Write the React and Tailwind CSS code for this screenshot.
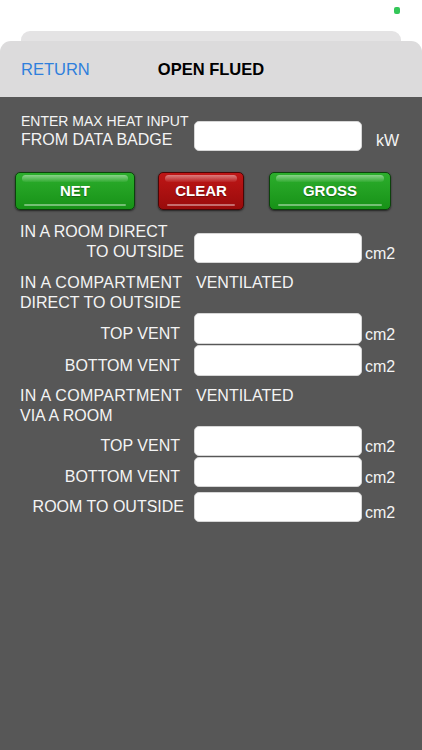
const labelText = 'text-[16px] leading-[20px] text-[#f4f4f4]';

function Field() {
  return <div className="h-full w-[168px] shrink-0 rounded-[5px] border border-[#d6d6d6] bg-white" />;
}

function GlossButton({ label, width, red }) {
  const tone = red
    ? 'border-[#4a0606] from-[#bf1616] to-[#990b0b]'
    : 'border-[#0c420c] from-[#2cae2c] to-[#179217]';
  return (
    <button
      className={`relative h-[38px] shrink-0 rounded-[5px] border bg-linear-to-b ${tone} shadow-[0_1px_2px_rgba(0,0,0,0.6)]`}
      style={{ width }}
    >
      <span className="absolute top-[2px] right-[6px] left-[6px] h-[7px] rounded-full bg-linear-to-b from-white/45 to-white/5" />
      <span className="absolute right-[8px] bottom-[3px] left-[8px] h-[2px] rounded-full bg-white/40" />
      <span className="relative text-[15px] font-bold text-white [text-shadow:0_1px_1px_rgba(0,0,0,0.35)]">{label}</span>
    </button>
  );
}

function VentRow({ label, className = '', labelAlign = 'self-end', labelEnd = 180 }) {
  return (
    <div className={`flex h-[30px] ${className}`}>
      <div className={`flex w-[194px] shrink-0 justify-end ${labelAlign}`} style={{ paddingRight: 194 - labelEnd }}>
        <span className={labelText}>{label}</span>
      </div>
      <Field />
      <span className={`ml-[3px] self-end ${labelText} translate-y-[1px]`}>cm2</span>
    </div>
  );
}

function SectionTitle({ second, className = '' }) {
  return (
    <div className={`pl-[20px] ${className}`}>
      <div className={`flex ${labelText}`}>
        <span className="w-[176px] tracking-[0.3px]">IN A COMPARTMENT</span>
        <span>VENTILATED</span>
      </div>
      <div className={labelText}>{second}</div>
    </div>
  );
}

export default function App() {
  return (
    <div className="relative min-h-[750px] bg-white font-['Liberation_Sans',Arial,sans-serif]">
      <span className="absolute top-[7px] left-[394px] h-[7px] w-[6px] rounded-[2px] bg-[#34c759]" />

      <div className="pt-[31px]">
        <div className="mx-[21px] h-[10px] rounded-t-[9px] bg-[#e4e3e4]" />
        <div className="relative flex h-[56px] items-center rounded-t-[11px] bg-[#dcdbdc] pl-[21px]">
          <span className="text-[16.5px] text-[#2f7fdc]">RETURN</span>
          <span className="absolute left-0 right-0 text-center text-[16.5px] font-bold text-black">OPEN FLUED</span>
        </div>
      </div>

      <div className="min-h-[653px] bg-[#575757] pb-6">
        {/* max heat input */}
        <div className="flex h-[40px] pt-[16px] box-content">
          <div className="w-[194px] shrink-0 pl-[21px]">
            <div className="text-[14px] leading-[17px] text-[#f4f4f4]">ENTER MAX HEAT INPUT</div>
            <div className="text-[16px] leading-[20px] text-[#f4f4f4]">FROM DATA BADGE</div>
          </div>
          <div className="mt-[8px] h-[30px]">
            <Field />
          </div>
          <span className={`ml-[14px] mt-[18px] ${labelText}`}>kW</span>
        </div>

        {/* buttons */}
        <div className="mt-[19px] flex pl-[15px]">
          <GlossButton label="NET" width={120} />
          <div className="ml-[23px]">
            <GlossButton label="CLEAR" width={86} red />
          </div>
          <div className="ml-[25px]">
            <GlossButton label="GROSS" width={122} />
          </div>
        </div>

        {/* room direct */}
        <div className="mt-[12px] flex h-[42px]">
          <div className="w-[194px] shrink-0">
            <div className={`pl-[20px] ${labelText}`}>IN A ROOM DIRECT</div>
            <div className={`pr-[10px] text-right ${labelText}`}>TO OUTSIDE</div>
          </div>
          <div className="mt-[11px] h-[30px]">
            <Field />
          </div>
          <span className={`ml-[3px] mt-[22px] ${labelText}`}>cm2</span>
        </div>

        <SectionTitle second="DIRECT TO OUTSIDE" className="mt-[9px]" />
        <VentRow label="TOP VENT" className="h-[31px]" />
        <VentRow label="BOTTOM VENT" className="mt-[1px] h-[31px]" />

        <SectionTitle second="VIA A ROOM" className="mt-[10px]" />
        <VentRow label="TOP VENT" />
        <VentRow label="BOTTOM VENT" className="mt-[1px]" />
        <VentRow label="ROOM TO OUTSIDE" className="mt-[5px]" labelAlign="self-center" labelEnd={184} />
      </div>
    </div>
  );
}
